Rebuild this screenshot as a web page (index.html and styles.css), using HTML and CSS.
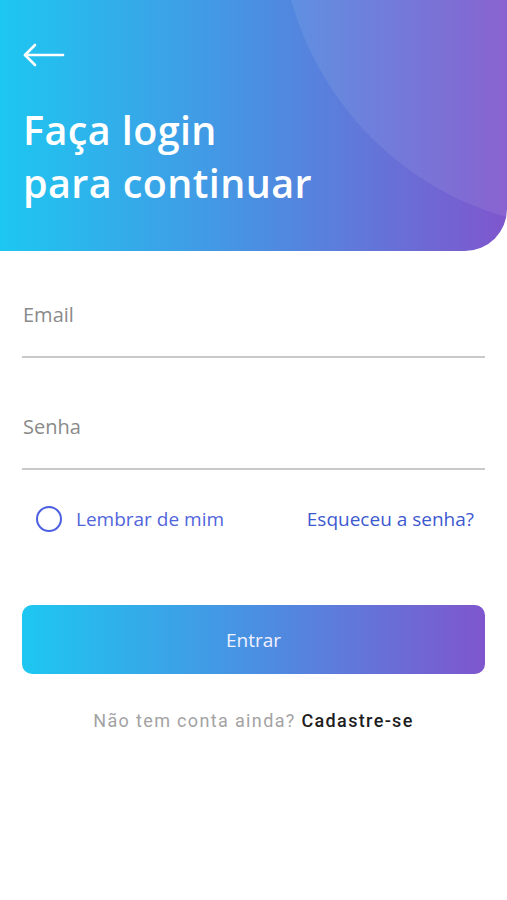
FILE: index.html
```html
<!DOCTYPE html>
<html lang="pt">

<head>
    <meta charset="utf-8">
    <meta name="viewport" content="width=device-width, initial-scale=1.0">
    <title>Login</title>
    <link rel="stylesheet" href="styles.css">
</head>

<body>
    <header class="topo">
        <div class="bolha"></div>
        <button class="voltar" aria-label="Voltar">
            <svg width="42" height="24" viewBox="0 0 42 24" fill="none" stroke="#fff" stroke-width="2.6" stroke-linecap="round" stroke-linejoin="round">
                <path d="M2 12H40"/>
                <path d="M12 2L2 12L12 22"/>
            </svg>
        </button>
        <h1>Faça login<br>para continuar</h1>
    </header>

    <form class="formulario">
        <label class="campo">
            <input type="email" placeholder="Email">
        </label>
        <label class="campo">
            <input type="password" placeholder="Senha">
        </label>

        <div class="opcoes">
            <label class="lembrar">
                <span class="radio"></span>
                Lembrar de mim
            </label>
            <a href="#" class="esqueceu">Esqueceu a senha?</a>
        </div>

        <button type="button" class="entrar">Entrar</button>

        <p class="cadastro">Não tem conta ainda? <a href="#">Cadastre-se</a></p>
    </form>
</body>

</html>
```

FILE: styles.css
```css
body {
    margin: 0;
    font-family: "Open Sans", sans-serif;
    background: #fff;
}

.topo {
    position: relative;
    overflow: hidden;
    height: 251px;
    box-sizing: border-box;
    padding: 43px 23px 0;
    background: linear-gradient(90deg, #1dc7f1 0%, #4a90e2 50%, #7f56cd 100%);
    border-bottom-right-radius: 42px;
    color: #fff;
}

/* circulo claro no canto */
.bolha {
    position: absolute;
    width: 624px;
    height: 624px;
    left: 280px;
    top: -395px;
    border-radius: 50%;
    background: rgba(255, 255, 255, 0.08);
}

.voltar {
    position: relative;
    display: block;
    padding: 0;
    border: 0;
    background: none;
    cursor: pointer;
}

.voltar svg {
    display: block;
}

h1 {
    position: relative;
    margin: 37px 0 0;
    font-size: 39.5px;
    font-weight: 600;
    letter-spacing: 0.4px;
    line-height: 53px;
}

.formulario {
    padding: 0 22px;
}

.campo {
    display: block;
    margin-top: 32px;
    border-bottom: 2px solid #c9c9c9;
}

.campo + .campo {
    margin-top: 37px;
}

.campo input {
    width: 100%;
    box-sizing: border-box;
    border: 0;
    outline: none;
    padding: 18px 1px 28px;
    font-family: "Open Sans", sans-serif;
    font-size: 20px;
    line-height: 27px;
    color: #444;
    background: none;
}

.campo input::placeholder {
    color: #8a8a8a;
}

.opcoes {
    display: flex;
    justify-content: space-between;
    align-items: center;
    margin-top: 36px;
    padding: 0 11px 0 14px;
}

.lembrar {
    display: flex;
    align-items: center;
    gap: 14px;
    color: #5265dc;
    font-size: 19px;
}

.radio {
    width: 22px;
    height: 22px;
    border: 2.5px solid #4c5fe0;
    border-radius: 50%;
}

.esqueceu {
    color: #3d59d0;
    font-size: 19px;
    text-decoration: none;
}

.entrar {
    display: block;
    width: 100%;
    height: 69px;
    margin-top: 73px;
    border: 0;
    border-radius: 10px;
    background: linear-gradient(90deg, #1dc7f1 0%, #4a90e2 50%, #7f56cd 100%);
    color: #f2f2ff;
    font-family: "Open Sans", sans-serif;
    font-size: 19px;
    cursor: pointer;
}

.cadastro {
    margin: 36px 0 0;
    text-align: center;
    font-family: Roboto, sans-serif;
    font-size: 18px;
    letter-spacing: 1.35px;
    color: #a3a3a3;
}

.cadastro a {
    color: #1e1e1e;
    font-weight: 500;
    text-decoration: none;
}
```
